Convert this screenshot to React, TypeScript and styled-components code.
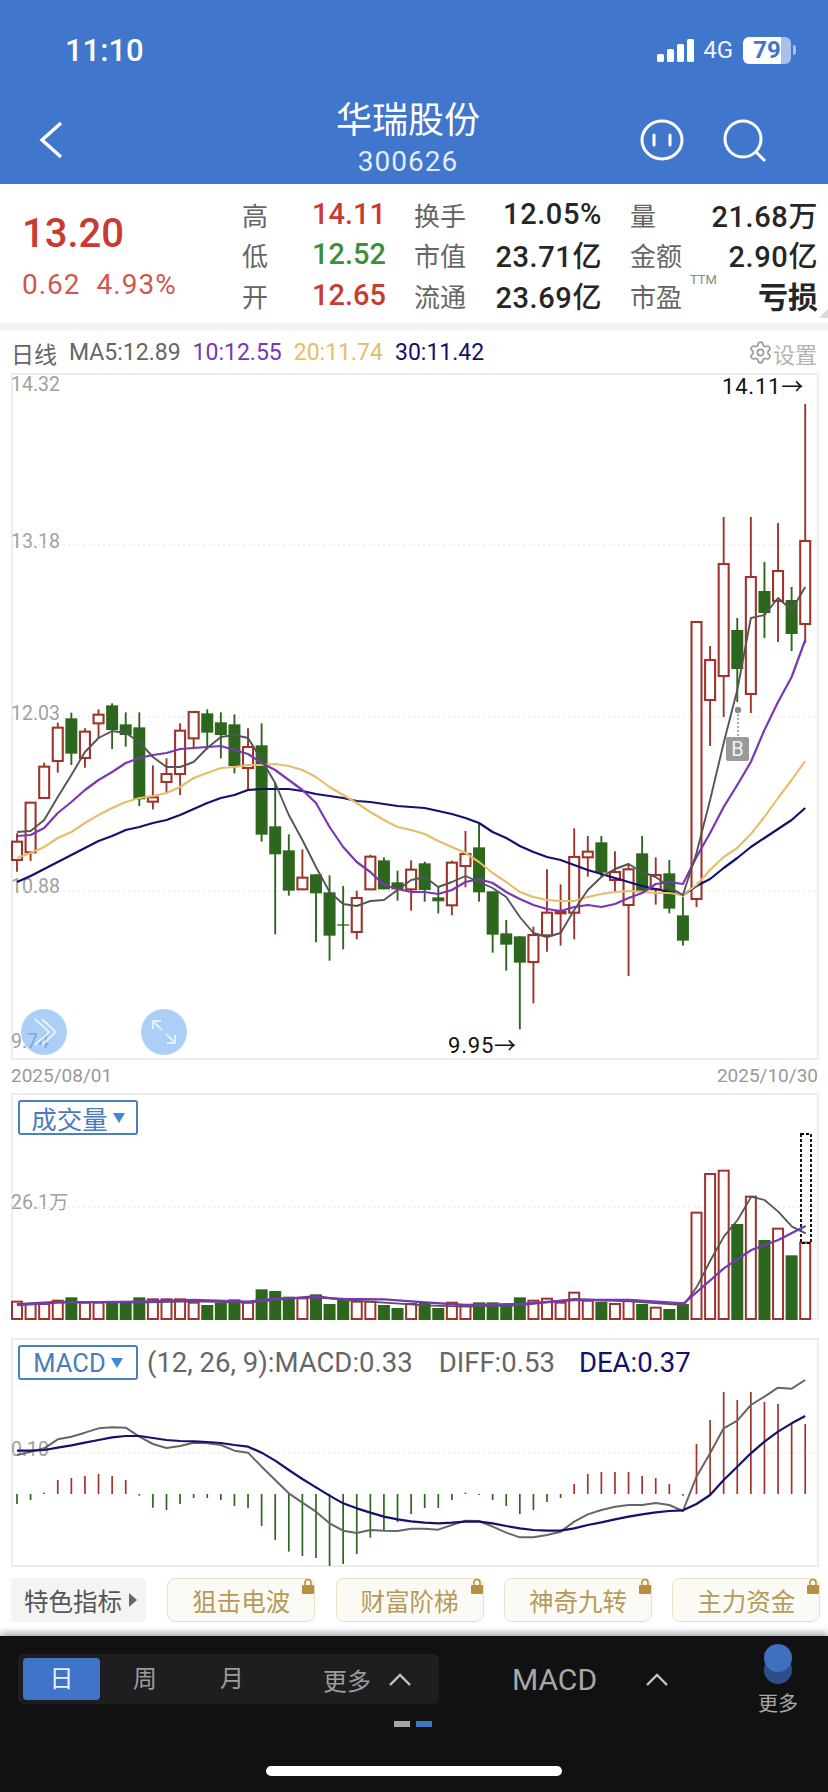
import styled, { createGlobalStyle } from 'styled-components';
import { Settings } from 'lucide-react';

const GlobalStyle = createGlobalStyle`
  html, body { margin: 0; padding: 0; background: #fff; }
  body { font-family: Roboto, "Noto Sans CJK SC", sans-serif; }
`;

const RED = '#9e352c';
const GREEN = '#2d671d';
const GREY_LINE = '#555555';
const PURPLE = '#7a37b5';
const GOLD = '#e6bd68';
const NAVY = '#14106b';

const xOf = (i: number) => 17 + i * 13.59;

// candles: high, bodyTop, bodyBottom, low, up (1 = hollow red). first block read in crop units
const rawCandles = [
  [460, 485, 540, 575, 1], [368, 368, 517, 543, 1], [248, 260, 354, 354, 1], [128, 143, 243, 278, 1],
  [98, 115, 221, 255, 0], [145, 155, 234, 263, 1], [88, 104, 130, 175, 1], [70, 76, 150, 207, 0],
  [97, 133, 165, 200, 0], [97, 142, 358, 378, 0], [256, 352, 365, 388, 1], [235, 282, 306, 340, 1],
  [130, 152, 282, 345, 1], [96, 96, 175, 205, 1], [88, 100, 158, 208, 0], [97, 127, 165, 235, 0],
  [103, 133, 258, 280, 0], [145, 201, 264, 330, 1], [130, 196, 464, 485, 0], [308, 439, 523, 763, 0],
  [463, 511, 632, 647, 0], [508, 593, 628, 628, 1], [583, 583, 640, 787, 0], [586, 637, 767, 842, 0],
  [618, 733, 737, 808, 0], [632, 654, 756, 778, 1], [524, 530, 628, 628, 1], [532, 541, 628, 628, 0],
  [572, 607, 628, 662, 0], [541, 569, 628, 692, 1], [545, 550, 630, 665, 0], [620, 652, 664, 700, 0],
  [542, 548, 676, 706, 1], [453, 522, 558, 622, 1], [432, 502, 637, 665, 0], [634, 634, 764, 818, 0],
  [720, 760, 794, 872, 0], [769, 769, 848, 1048, 0], [740, 765, 846, 970, 1], [568, 698, 766, 815, 1],
  [613, 696, 700, 797, 1], [445, 531, 698, 778, 1], [468, 515, 532, 590, 1], [468, 487, 578, 590, 0],
  [514, 576, 600, 636, 1], [550, 568, 675, 888, 1], [468, 520, 632, 640, 0], [532, 585, 628, 674, 1],
  [540, 580, 686, 700, 0], [650, 706, 782, 797, 0],
];

const candles = [
  ...rawCandles.map((c) => [680 + c[0] / 3, 680 + c[1] / 3, 680 + c[2] / 3, 680 + c[3] / 3, c[4]]),
  [622, 622, 899, 907, 1], [646, 660, 700, 746, 1], [517, 564, 676, 717, 1], [618, 630, 669, 702, 0],
  [517, 577, 694, 713, 1], [562, 591, 613, 638, 0], [523, 571, 601, 642, 1], [587, 600, 634, 651, 0],
  [404, 541, 624, 643, 1],
];

const ma5 = [832, 831, 820, 797, 775, 752, 738, 731, 733, 742, 757, 767, 767, 762, 748, 737, 735, 738, 760, 783, 815, 840, 867, 892, 904, 906, 901, 900, 890, 880, 877, 887, 882, 876, 882, 888, 897, 917, 933, 937, 933, 910, 890, 877, 869, 864, 872, 877, 887, 895, 853, 800, 743, 690, 618, 615, 598, 610, 587];
const ma10 = [836, 835, 828, 813, 802, 790, 780, 772, 763, 758, 755, 753, 749, 748, 747, 746, 750, 754, 763, 770, 780, 790, 803, 827, 847, 862, 872, 885, 889, 892, 892, 894, 890, 882, 879, 883, 892, 899, 905, 909, 911, 907, 905, 907, 904, 898, 893, 884, 882, 884, 857, 833, 807, 785, 762, 730, 702, 677, 640];
const ma20 = [858, 853, 847, 838, 832, 823, 815, 808, 802, 798, 796, 793, 787, 778, 773, 768, 767, 765, 765, 764, 766, 770, 777, 787, 795, 803, 812, 820, 827, 830, 834, 841, 847, 853, 862, 873, 882, 892, 897, 900, 901, 901, 897, 894, 892, 891, 892, 893, 893, 895, 885, 870, 857, 848, 834, 817, 798, 780, 761];
const ma30 = [882, 876, 869, 862, 855, 848, 841, 836, 830, 827, 823, 820, 815, 809, 803, 798, 795, 790, 789, 789, 789, 791, 794, 796, 798, 801, 802, 804, 806, 807, 808, 811, 814, 818, 823, 832, 838, 846, 852, 857, 860, 865, 870, 874, 878, 882, 886, 889, 892, 895, 886, 879, 868, 858, 847, 838, 829, 820, 808];

const seriesPoints = (ys: number[]) => ys.map((y, i) => `${xOf(i)},${y}`).join(' ');

// volume: top of each bar in crop units, up flag
const volumes = [
  [665, 1], [672, 1], [672, 1], [662, 1], [652, 0], [668, 1], [668, 1], [668, 0], [665, 0], [652, 0],
  [658, 1], [658, 1], [658, 1], [668, 1], [675, 0], [668, 0], [658, 0], [668, 1], [628, 0], [633, 0],
  [650, 0], [655, 1], [643, 0], [672, 0], [658, 0], [665, 1], [665, 1], [675, 0], [684, 0], [672, 1],
  [668, 0], [684, 0], [668, 1], [675, 1], [667, 0], [667, 0], [675, 0], [652, 0], [662, 1], [656, 1],
  [668, 1], [638, 1], [662, 1], [665, 0], [672, 1], [660, 1], [672, 0], [683, 1], [687, 0], [672, 0],
  [398, 1], [282, 1], [272, 1], [432, 0], [350, 1], [480, 0], [446, 1], [526, 0], [488, 1],
];

const volPurple = [[32, 675], [109, 668], [263, 665], [366, 660], [470, 665], [521, 656], [598, 652], [650, 657], [728, 658], [805, 667], [882, 675], [985, 672], [1088, 660], [1192, 660], [1295, 670], [1346, 600], [1371, 565], [1423, 510], [1474, 480], [1526, 438]];
const volGrey = [[32, 672], [109, 665], [263, 668], [366, 664], [470, 668], [521, 660], [598, 648], [650, 660], [728, 668], [805, 676], [882, 680], [985, 676], [1088, 657], [1192, 664], [1295, 675], [1320, 620], [1346, 540], [1371, 470], [1397, 420], [1423, 350], [1448, 360], [1474, 395], [1500, 440], [1526, 460]];

const volLine = (pts: number[][]) => pts.map(([x, y]) => `${x / 1.894},${1080 + y / 3}`).join(' ');

const macdBars = [522, 510, 488, 450, 444, 438, 432, 438, 450, 497, 533, 540, 522, 504, 504, 510, 528, 534, 588, 630, 665, 678, 684, 708, 702, 672, 623, 603, 576, 552, 534, 534, 510, 488, 495, 510, 528, 552, 540, 516, 504, 462, 432, 426, 426, 426, 438, 444, 462, 497, 342, 270, 186, 210, 186, 216, 222, 282, 282];
const diff = [375, 365, 355, 328, 320, 308, 295, 292, 293, 320, 342, 354, 348, 338, 340, 345, 362, 368, 410, 450, 490, 518, 545, 580, 602, 609, 600, 602, 603, 596, 596, 599, 585, 572, 573, 590, 608, 622, 622, 615, 605, 575, 553, 540, 530, 525, 525, 519, 525, 543, 440, 370, 295, 272, 225, 200, 173, 176, 150];
const dea = [362, 362, 360, 353, 346, 338, 330, 322, 318, 318, 324, 330, 333, 334, 336, 339, 345, 350, 368, 392, 420, 447, 472, 497, 520, 535, 548, 560, 568, 574, 578, 580, 578, 575, 575, 580, 588, 595, 600, 602, 602, 595, 585, 577, 568, 560, 553, 547, 543, 541, 522, 495, 450, 410, 370, 335, 305, 280, 258];
const macdY = (z: number) => 1330 + z / 3;

const STATS = [
  ['高', '14.11', 'up', '换手', '12.05%', '量', '21.68万'],
  ['低', '12.52', 'down', '市值', '23.71亿', '金额', '2.90亿'],
  ['开', '12.65', 'up', '流通', '23.69亿', '市盈', '亏损'],
];

const FEATURES = ['狙击电波', '财富阶梯', '神奇九转', '主力资金'];

export default function App() {
  return (
    <Page>
      <GlobalStyle />
      <Header>
        <StatusBar>
          <Clock>11:10</Clock>
          <StatusRight>
            <svg width="37" height="23" viewBox="0 0 37 23">
              <rect x="0" y="15" width="7" height="8" rx="1.5" fill="#fff" />
              <rect x="10" y="10" width="7" height="13" rx="1.5" fill="#fff" />
              <rect x="20" y="5" width="7" height="18" rx="1.5" fill="#fff" />
              <rect x="30" y="0" width="7" height="23" rx="1.5" fill="#fff" />
            </svg>
            <NetLabel>4G</NetLabel>
            <Battery>79</Battery>
            <BatteryTip />
          </StatusRight>
        </StatusBar>
        <NavRow>
          <BackSlot>
            <svg width="24" height="38" viewBox="0 0 24 38" fill="none" stroke="#fff" strokeWidth="3.4">
              <polyline points="22,2 3,19 22,36" />
            </svg>
          </BackSlot>
          <TitleStack>
            <Title>华瑞股份</Title>
            <Code>300626</Code>
          </TitleStack>
          <NavActions>
            <svg width="44" height="42" viewBox="0 0 44 42" fill="none" stroke="#fff" strokeWidth="3">
              <ellipse cx="22" cy="21" rx="20" ry="19" />
              <line x1="14" y1="16" x2="14" y2="26" strokeLinecap="round" />
              <line x1="30" y1="16" x2="30" y2="26" strokeLinecap="round" />
            </svg>
            <svg width="44" height="44" viewBox="0 0 44 44" fill="none" stroke="#fff" strokeWidth="3">
              <circle cx="20" cy="20" r="18" />
              <line x1="33" y1="33" x2="42" y2="42" />
            </svg>
          </NavActions>
        </NavRow>
      </Header>

      <Quote>
        <PriceBox>
          <Price>13.20</Price>
          <Change>
            <span>0.62</span>
            <span>4.93%</span>
          </Change>
        </PriceBox>
        <StatsGrid>
          {STATS.map((row) => (
            <StatsRow key={row[0]}>
              <StatLabel>{row[0]}</StatLabel>
              <StatPrice $down={row[2] === 'down'}>{row[1]}</StatPrice>
              <StatLabel>{row[3]}</StatLabel>
              <StatValue>{row[4]}</StatValue>
              <StatLabel>
                {row[5]}
                {row[5] === '市盈' && <Ttm>TTM</Ttm>}
              </StatLabel>
              <StatValue $bold={row[6] === '亏损'}>{row[6]}</StatValue>
            </StatsRow>
          ))}
        </StatsGrid>
        <CornerMark />
      </Quote>
      <SectionGap />

      <Legend>
        <LegendItem $color="#666" $gap={12}>日线</LegendItem>
        <LegendItem $color="#666" $gap={12}>MA5:12.89</LegendItem>
        <LegendItem $color={PURPLE} $gap={12}>10:12.55</LegendItem>
        <LegendItem $color={GOLD} $gap={12}>20:11.74</LegendItem>
        <LegendItem $color={NAVY} $gap={0}>30:11.42</LegendItem>
        <SettingsLink>
          <Settings size={25} strokeWidth={1.6} />
          设置
        </SettingsLink>
      </Legend>

      <Panel $height={687}>
        <AxisLabel $top={2}>14.32</AxisLabel>
        <AxisLabel $top={159}>13.18</AxisLabel>
        <AxisLabel $top={331}>12.03</AxisLabel>
        <AxisLabel $top={504}>10.88</AxisLabel>
        <AxisLabel $top={659}>9.74</AxisLabel>
        <ChartSvg width="808" height="687" viewBox="11 373 808 687">
          {[545, 717, 891].map((y) => (
            <line key={y} x1="13" x2="817" y1={y} y2={y} stroke="#e2e2e2" strokeWidth="1" strokeDasharray="2 3" />
          ))}
          {candles.map((c, i) => {
            const color = c[4] ? RED : GREEN;
            const x = xOf(i);
            return (
              <g key={i}>
                <line x1={x} x2={x} y1={c[0]} y2={c[3]} stroke={color} strokeWidth="1.9" />
                {c[4] ? (
                  <rect x={x - 5} y={c[1]} width="10" height={c[2] - c[1]} fill="#fff" stroke={color} strokeWidth="2.1" />
                ) : (
                  <rect x={x - 6} y={c[1]} width="12" height={c[2] - c[1]} fill={color} />
                )}
              </g>
            );
          })}
          <polyline points={seriesPoints(ma30)} fill="none" stroke={NAVY} strokeWidth="2.2" strokeLinejoin="round" />
          <polyline points={seriesPoints(ma20)} fill="none" stroke={GOLD} strokeWidth="2.1" strokeLinejoin="round" />
          <polyline points={seriesPoints(ma10)} fill="none" stroke={PURPLE} strokeWidth="2.2" strokeLinejoin="round" />
          <polyline points={seriesPoints(ma5)} fill="none" stroke={GREY_LINE} strokeWidth="1.9" strokeLinejoin="round" />
          <line x1="738" x2="738" y1="710" y2="737" stroke="#8b8b8b" strokeWidth="1.5" strokeDasharray="2 2" />
          <circle cx="738" cy="710" r="3.2" fill="#8b8b8b" />
        </ChartSvg>
        <SignalBadge>B</SignalBadge>
        <PriceNote $left={711} $top={2}>14.11→</PriceNote>
        <PriceNote $left={437} $top={661}>9.95→</PriceNote>
        <RoundButton $left={10}>
          <svg width="30" height="30" viewBox="0 0 30 30" fill="none" stroke="#e4effc" strokeWidth="2">
            <polyline points="6,2 20,15 6,28" />
            <polyline points="13,2 27,15 13,28" />
          </svg>
        </RoundButton>
        <RoundButton $left={130}>
          <svg width="26" height="26" viewBox="0 0 26 26" fill="none" stroke="#e4effc" strokeWidth="2">
            <polyline points="2,10 2,2 10,2" />
            <line x1="2" y1="2" x2="11" y2="11" />
            <polyline points="24,16 24,24 16,24" />
            <line x1="24" y1="24" x2="15" y2="15" />
          </svg>
        </RoundButton>
      </Panel>

      <DateRow>
        <span>2025/08/01</span>
        <span>2025/10/30</span>
      </DateRow>

      <Panel $height={227}>
        <AxisLabel $top={100}>26.1万</AxisLabel>
        <ChartSvg width="808" height="227" viewBox="11 1093 808 227">
          <line x1="13" x2="817" y1="1207" y2="1207" stroke="#e0e0e0" strokeWidth="1" strokeDasharray="2 3" />
          {volumes.map((v, i) => {
            const x = xOf(i);
            const top = 1080 + v[0] / 3;
            return v[1] ? (
              <rect key={i} x={x - 5} y={top} width="10" height={1319 - top} fill="#fff" stroke={RED} strokeWidth="2" />
            ) : (
              <rect key={i} x={x - 6} y={top} width="12" height={1320 - top} fill={GREEN} />
            );
          })}
          <rect x="801" y="1134" width="10" height="109" fill="none" stroke="#000" strokeWidth="1.8" strokeDasharray="3 2" />
          <polyline points={volLine(volGrey)} fill="none" stroke={GREY_LINE} strokeWidth="1.8" strokeLinejoin="round" />
          <polyline points={volLine(volPurple)} fill="none" stroke={PURPLE} strokeWidth="2.3" strokeLinejoin="round" />
        </ChartSvg>
        <PanelHead>
          <IndicatorTag>
            成交量
            <TagCaret />
          </IndicatorTag>
        </PanelHead>
      </Panel>

      <MacdGap />

      <Panel $height={229}>
        <AxisLabel $top={102}>0.10</AxisLabel>
        <ChartSvg width="808" height="229" viewBox="11 1338 808 229">
          <line x1="13" x2="817" y1="1453" y2="1453" stroke="#e0e0e0" strokeWidth="1" strokeDasharray="2 3" />
          {macdBars.map((z, i) => {
            const up = z < 492;
            return (
              <line key={i} x1={xOf(i)} x2={xOf(i)} y1={macdY(492)} y2={macdY(z)} stroke={up ? RED : GREEN} strokeWidth="1.7" />
            );
          })}
          <polyline points={diff.map((z, i) => `${xOf(i)},${macdY(z)}`).join(' ')} fill="none" stroke="#666" strokeWidth="2" strokeLinejoin="round" />
          <polyline points={dea.map((z, i) => `${xOf(i)},${macdY(z)}`).join(' ')} fill="none" stroke={NAVY} strokeWidth="2.2" strokeLinejoin="round" />
        </ChartSvg>
        <PanelHead>
          <IndicatorTag>
            MACD
            <TagCaret />
          </IndicatorTag>
          <MacdInfo $color="#666" $gap={26}>(12, 26, 9):MACD:0.33</MacdInfo>
          <MacdInfo $color="#666" $gap={24}>DIFF:0.53</MacdInfo>
          <MacdInfo $color={NAVY} $gap={0}>DEA:0.37</MacdInfo>
        </PanelHead>
      </Panel>

      <FeatureRow>
        <FeatureLead>
          特色指标
          <LeadCaret />
        </FeatureLead>
        {FEATURES.map((name) => (
          <FeatureButton key={name}>
            {name}
            <LockMark>
              <svg width="12" height="16" viewBox="0 0 12 16">
                <path d="M3 8V4.5a3 3 0 0 1 6 0V8" fill="none" stroke="#b98f3f" strokeWidth="1.6" />
                <rect x="0" y="7" width="12" height="9" rx="1" fill="#b98f3f" />
              </svg>
            </LockMark>
          </FeatureButton>
        ))}
      </FeatureRow>

      <DarkBar>
        <DarkTop>
          <Segment>
            <SegmentTab $width={77} $active>日</SegmentTab>
            <SegmentTab $width={90}>周</SegmentTab>
            <SegmentTab $width={84}>月</SegmentTab>
            <SegmentMore>
              更多
              <Chevron />
            </SegmentMore>
          </Segment>
          <MacdSwitch>
            MACD
            <Chevron />
          </MacdSwitch>
          <MoreColumn>
            <svg width="28" height="40" viewBox="0 0 28 40">
              <ellipse cx="14" cy="26" rx="14" ry="14" fill="#2c4f87" />
              <ellipse cx="14" cy="14" rx="14" ry="14" fill="#3f6fbd" />
            </svg>
            <MoreLabel>更多</MoreLabel>
          </MoreColumn>
        </DarkTop>
        <Pager>
          <PagerDot $color="#a5a5a5" />
          <PagerDot $color="#3f74c8" />
        </Pager>
        <HomeBar />
      </DarkBar>
    </Page>
  );
}

function Chevron() {
  return (
    <svg width="22" height="13" viewBox="0 0 22 13" fill="none" stroke="#c4c4c4" strokeWidth="2.4">
      <polyline points="1,12 11,2 21,12" />
    </svg>
  );
}

const Page = styled.div`
  width: 828px;
  height: 1792px;
  display: flex;
  flex-direction: column;
  overflow: hidden;
  background: #fff;
  font-family: Roboto, "Noto Sans CJK SC", sans-serif;
`;

const Header = styled.div`
  height: 184px;
  background: #4076cc;
  color: #fff;
`;

const StatusBar = styled.div`
  height: 100px;
  padding: 0 33px 0 65px;
  box-sizing: border-box;
  display: flex;
  align-items: center;
  justify-content: space-between;
`;

const Clock = styled.div`
  font-size: 31px;
  font-weight: 500;
`;

const StatusRight = styled.div`
  display: flex;
  align-items: center;
  margin-right: -1px;
`;

const NetLabel = styled.div`
  font-size: 24px;
  margin: 0 10px 0 9px;
  color: #eef3fb;
`;

const Battery = styled.div`
  width: 48px;
  height: 27px;
  border-radius: 6px;
  background: linear-gradient(90deg, #fff 79%, rgba(255, 255, 255, 0.55) 79%);
  color: #4076cc;
  font-size: 24px;
  font-weight: 700;
  line-height: 27px;
  text-align: center;
`;

const BatteryTip = styled.div`
  width: 3px;
  height: 10px;
  margin-left: 2px;
  border-radius: 0 3px 3px 0;
  background: rgba(255, 255, 255, 0.55);
`;

const NavRow = styled.div`
  display: grid;
  grid-template-columns: 328px 160px 1fr;
  height: 84px;
`;

const BackSlot = styled.div`
  padding: 21px 0 0 39px;
`;

const TitleStack = styled.div`
  display: flex;
  flex-direction: column;
  align-items: center;
`;

const Title = styled.div`
  font-size: 36px;
  line-height: 36px;
  margin-top: 3px;
  white-space: nowrap;
`;

const Code = styled.div`
  font-size: 28px;
  line-height: 28px;
  margin-top: 9px;
  letter-spacing: 1px;
  color: #e4ecf9;
`;

const NavActions = styled.div`
  display: flex;
  gap: 39px;
  padding: 19px 0 0 152px;
  svg { flex: none; }
`;

const Quote = styled.div`
  position: relative;
  height: 139px;
  display: flex;
`;

const PriceBox = styled.div`
  width: 242px;
  padding: 25px 0 0 22px;
  box-sizing: border-box;
`;

const Price = styled.div`
  font-size: 40px;
  line-height: 50px;
  font-weight: 500;
  color: #c93a32;
`;

const Change = styled.div`
  display: flex;
  gap: 16px;
  margin-top: 8px;
  font-size: 28px;
  line-height: 36px;
  letter-spacing: 1px;
  color: #d0574e;
`;

const StatsGrid = styled.div`
  flex: 1;
  padding-top: 9px;
`;

const StatsRow = styled.div`
  display: grid;
  grid-template-columns: 70px 102px 66px 122px 100px 116px;
  height: 40px;
  align-items: center;
`;

const StatLabel = styled.div`
  position: relative;
  font-size: 26px;
  color: #666;
  white-space: nowrap;
  &:nth-child(5) { padding-left: 28px; }
`;

const StatPrice = styled.div<{ $down?: boolean }>`
  font-size: 29px;
  font-weight: 500;
  color: ${(p) => (p.$down ? '#3c8f3a' : '#c93a32')};
`;

const StatValue = styled.div<{ $bold?: boolean }>`
  font-size: ${(p) => (p.$bold ? '30px' : '29px')};
  font-weight: ${(p) => (p.$bold ? 700 : 500)};
  letter-spacing: ${(p) => (p.$bold ? '0' : '0.6px')};
  color: #262626;
  text-align: right;
  white-space: nowrap;
`;

const Ttm = styled.span`
  position: absolute;
  left: 88px;
  top: -5px;
  font-size: 13px;
  color: #888;
`;

const CornerMark = styled.div`
  position: absolute;
  right: 0;
  bottom: 5px;
  width: 0;
  height: 0;
  border-left: 9px solid transparent;
  border-bottom: 9px solid #d9d9d9;
`;

const SectionGap = styled.div`
  height: 8px;
  background: #f4f4f4;
`;

const Legend = styled.div`
  height: 42px;
  padding: 1px 11px 0 11px;
  box-sizing: border-box;
  display: flex;
  align-items: center;
`;

const LegendItem = styled.div<{ $color: string; $gap: number }>`
  font-size: 23px;
  color: ${(p) => p.$color};
  margin-right: ${(p) => p.$gap}px;
  white-space: nowrap;
`;

const SettingsLink = styled.div`
  margin-left: auto;
  display: flex;
  align-items: center;
  font-size: 22px;
  color: #b4b4b4;
  svg { color: #999; }
`;

const Panel = styled.div<{ $height: number }>`
  position: relative;
  margin-left: 11px;
  width: 808px;
  height: ${(p) => p.$height}px;
  flex: none;
  box-shadow: inset 0 0 0 2px #ededed;
`;

const ChartSvg = styled.svg`
  position: relative;
  display: block;
`;

const AxisLabel = styled.div<{ $top: number }>`
  position: absolute;
  left: 0;
  top: ${(p) => p.$top}px;
  font-size: 19.5px;
  line-height: 20px;
  color: #a0a0a0;
  white-space: nowrap;
`;

const PriceNote = styled.div<{ $left: number; $top: number }>`
  position: absolute;
  left: ${(p) => p.$left}px;
  top: ${(p) => p.$top}px;
  font-size: 22px;
  line-height: 24px;
  letter-spacing: 0.8px;
  color: #111;
  white-space: nowrap;
`;

const SignalBadge = styled.div`
  position: absolute;
  left: 715px;
  top: 364px;
  width: 23px;
  height: 24px;
  border-radius: 2px;
  background: #9a9a9a;
  color: #f2f2f2;
  font-size: 20px;
  line-height: 24px;
  text-align: center;
`;

const RoundButton = styled.div<{ $left: number }>`
  position: absolute;
  left: ${(p) => p.$left}px;
  top: 636px;
  width: 46px;
  height: 46px;
  border-radius: 50%;
  background: rgba(110, 172, 242, 0.58);
  display: flex;
  align-items: center;
  justify-content: center;
`;

const DateRow = styled.div`
  height: 33px;
  padding: 2px 10px 0 11px;
  box-sizing: border-box;
  display: flex;
  justify-content: space-between;
  font-size: 19px;
  line-height: 28px;
  color: #999;
`;

const PanelHead = styled.div`
  position: absolute;
  left: 7px;
  top: 7px;
  display: flex;
  align-items: center;
`;

const IndicatorTag = styled.div`
  width: 120px;
  height: 35px;
  box-sizing: border-box;
  border: 2px solid #4a80c0;
  border-radius: 3px;
  background: #fff;
  display: flex;
  align-items: center;
  justify-content: center;
  gap: 5px;
  font-size: 25.5px;
  color: #4a7cb9;
`;

const TagCaret = styled.span`
  width: 0;
  height: 0;
  border-left: 6px solid transparent;
  border-right: 6px solid transparent;
  border-top: 10px solid #3f86e0;
`;

const MacdGap = styled.div`
  height: 18px;
  flex: none;
`;

const MacdInfo = styled.div<{ $color: string; $gap: number }>`
  font-size: 27.5px;
  color: ${(p) => p.$color};
  white-space: nowrap;
  margin-right: ${(p) => p.$gap}px;
  &:nth-child(2) { margin-left: 9px; }
`;

const FeatureRow = styled.div`
  display: flex;
  gap: 20.3px;
  padding: 11px 0 14px 11px;
  height: 69px;
  box-sizing: border-box;
  flex: none;
`;

const FeatureLead = styled.div`
  width: 135px;
  height: 44px;
  margin-right: 1px;
  box-sizing: border-box;
  padding-left: 13px;
  border-radius: 4px;
  background: #f4f4f4;
  display: flex;
  align-items: center;
  gap: 7px;
  font-size: 24.5px;
  color: #555;
  white-space: nowrap;
`;

const LeadCaret = styled.span`
  width: 0;
  height: 0;
  border-top: 7px solid transparent;
  border-bottom: 7px solid transparent;
  border-left: 8px solid #666;
`;

const FeatureButton = styled.div`
  position: relative;
  width: 148px;
  height: 44px;
  flex: none;
  box-sizing: border-box;
  border: 1px solid #e8dfc6;
  border-radius: 8px;
  background: #fcfaf4;
  display: flex;
  align-items: center;
  justify-content: center;
  font-size: 24.5px;
  color: #b59a5a;
  white-space: nowrap;
`;

const LockMark = styled.div`
  position: absolute;
  right: 0;
  top: -1px;
  line-height: 0;
`;

const DarkBar = styled.div`
  flex: 1;
  background: #111;
  box-shadow: 0 -3px 7px rgba(0, 0, 0, 0.35);
  position: relative;
`;

const DarkTop = styled.div`
  height: 79px;
  padding: 8px 30px 0 18px;
  box-sizing: border-box;
  display: flex;
  align-items: flex-start;
`;

const Segment = styled.div`
  width: 421px;
  height: 50px;
  margin-top: 10px;
  padding: 4px 5px;
  box-sizing: border-box;
  border-radius: 6px;
  background: #1e1e1e;
  display: flex;
  align-items: center;
  font-size: 24px;
  color: #9c9c9c;
`;

const SegmentTab = styled.div<{ $active?: boolean; $width: number }>`
  width: ${(p) => p.$width}px;
  height: 42px;
  line-height: 42px;
  text-align: center;
  border-radius: 4px;
  background: ${(p) => (p.$active ? '#3f74c8' : 'transparent')};
  color: ${(p) => (p.$active ? '#e8f1ff' : '#9c9c9c')};
`;

const SegmentMore = styled.div`
  margin-left: 49px;
  display: flex;
  align-items: center;
  gap: 18px;
`;

const MacdSwitch = styled.div`
  margin: 10px 0 0 73px;
  height: 50px;
  display: flex;
  align-items: center;
  gap: 49px;
  font-size: 30px;
  color: #a8a8a8;
`;

const MoreColumn = styled.div`
  margin-left: auto;
  width: 40px;
  display: flex;
  flex-direction: column;
  align-items: center;
  gap: 9px;
`;

const MoreLabel = styled.div`
  font-size: 20px;
  line-height: 22px;
  color: #a8a8a8;
  white-space: nowrap;
`;

const Pager = styled.div`
  margin: 6px 0 0 394px;
  display: flex;
  gap: 6px;
`;

const PagerDot = styled.div<{ $color: string }>`
  width: 16px;
  height: 6px;
  background: ${(p) => p.$color};
`;

const HomeBar = styled.div`
  width: 296px;
  height: 10px;
  margin: 39px 0 0 266px;
  border-radius: 5px;
  background: #fff;
`;
